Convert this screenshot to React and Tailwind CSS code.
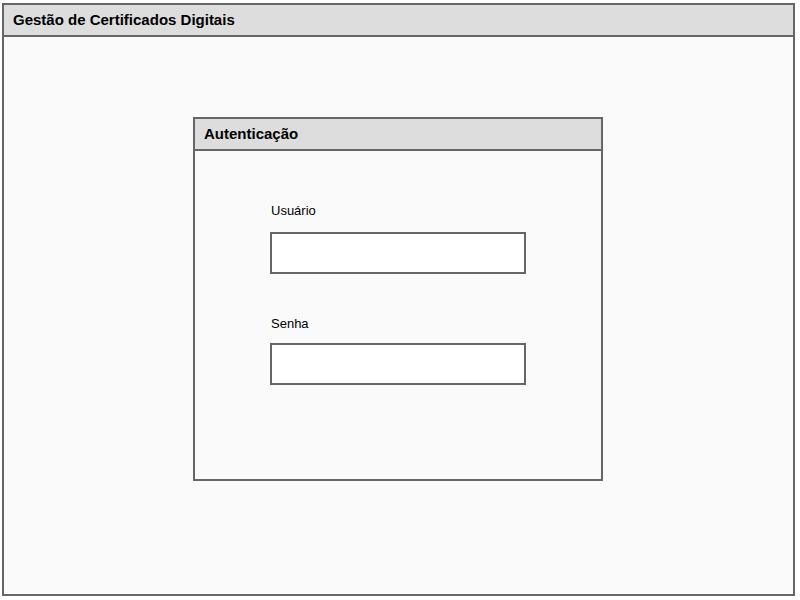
import React from 'react';

function Field({ label, className }) {
  return (
    <div className={className}>
      <label className="block pl-px text-[13px] leading-[15px] text-black">{label}</label>
      <input
        type="text"
        className="block w-[256px] h-[42px] bg-white border-2 border-[#666] outline-none"
      />
    </div>
  );
}

export default function App() {
  return (
    <div className="w-[800px] h-[600px] bg-white pt-[3px] pl-[2px] font-['Liberation_Sans',Arial,sans-serif]">
      {/* main window */}
      <div className="w-[793px] h-[593px] border-2 border-[#666] bg-[#fafafa] flex flex-col">
        <div className="h-[32px] shrink-0 bg-[#dddddd] border-b-2 border-[#666] flex items-center pl-[9px]">
          <h1 className="text-[15px] font-bold text-black">Gestão de Certificados Digitais</h1>
        </div>

        {/* login panel */}
        <div className="ml-[189px] mt-[80px] w-[410px] h-[364px] border-2 border-[#666] flex flex-col">
          <div className="h-[32px] shrink-0 bg-[#dddddd] border-b-2 border-[#666] flex items-center pl-[9px]">
            <h2 className="text-[15px] font-bold text-black">Autenticação</h2>
          </div>
          <div className="pl-[75px] pt-[52px]">
            <Field label="Usuário" className="flex flex-col gap-[14px]" />
            <Field label="Senha" className="flex flex-col gap-[12px] mt-[42px]" />
          </div>
        </div>
      </div>
    </div>
  );
}
